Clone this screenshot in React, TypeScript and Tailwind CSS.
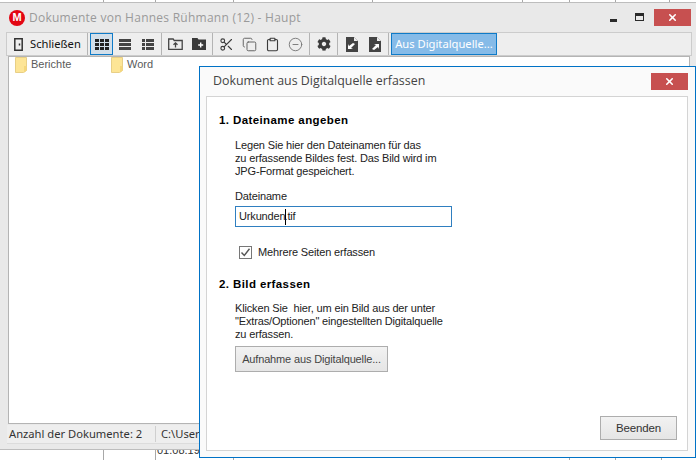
import { CircleMinus, Clipboard, Copy, Scissors, X } from "lucide-react";
import { FaCog } from "react-icons/fa";

const Sep = () => <div className="mx-[2px] h-full w-px shrink-0 bg-[#b4b4b4]" />;

function ToolBtn({ children, className = "" }: { children: React.ReactNode; className?: string }) {
  return (
    <div className={`flex h-full w-[23px] shrink-0 items-center justify-center text-[#3c3c3c] ${className}`}>
      {children}
    </div>
  );
}

function DocArrow({ flip }: { flip?: boolean }) {
  return (
    <svg width="12" height="15" viewBox="0 0 12 15" fill="#444">
      <path d="M0 0h8l4 4v11H0z" />
      <path d="M8 0l4 4H8z" fill="#eee" />
      <path
        d={flip ? "M3 12l4-4-2-1h5v5l-1-2-4 3z" : "M9 7L5 11l2 1H2V7l1 2 4-3z"}
        fill="#fff"
      />
    </svg>
  );
}

function FolderTile({ label, className }: { label: string; className: string }) {
  return (
    <div className={`flex items-start gap-[4px] ${className}`}>
      <svg width="12" height="16" viewBox="0 0 12 16" className="shrink-0">
        <path d="M.5.5h11v13l-3 2h-8z" fill="#fde596" stroke="#e8cf86" />
        <path d="M9 9h2.5v4.5L9 15.5z" fill="#f5d77c" />
      </svg>
      <span className="text-[#5a5a5a]">{label}</span>
    </div>
  );
}

function TableLines({ xs, h }: { xs: number[]; h: string }) {
  return (
    <div className={`flex ${h} shrink-0 bg-white`}>
      {xs.map((w, i) => (
        <div key={i} className="h-full border-r border-[#a8a8a8]" style={{ width: w }} />
      ))}
    </div>
  );
}

export default function App() {
  return (
    <div className="relative h-[460px] w-[696px] overflow-hidden bg-white font-['Open_Sans',sans-serif]">
      <div className="flex h-full flex-col">
        <TableLines xs={[104, 52, 78, 139, 150, 47, 46, 54]} h="h-[2px]" />

        {/* main window */}
        <div className="relative z-10 flex h-[448px] shrink-0 flex-col border-y border-[#bdbdbd] bg-[#e9e9e9]">
          <div className="flex h-[29px] shrink-0 items-center pl-[9px] pr-[5px]">
            <div className="flex h-[16px] w-[16px] items-center justify-center rounded-full bg-[#e30613] font-['Liberation_Sans',sans-serif] text-[11px] font-bold leading-none text-white">
              M
            </div>
            <span className="ml-[4px] whitespace-nowrap text-[12px] tracking-[0.25px] text-[#9a9a9a]">
              Dokumente von Hannes Rühmann (12) - Haupt
            </span>
            <div className="ml-auto flex items-center">
              <div className="mr-[18px] mt-[6px] h-[3px] w-[7px] bg-[#2a2a2a]" />
              <div className="mr-[10px] mt-[-2px] h-[8px] w-[9px] border border-t-[3px] border-[#2a2a2a]" />
              <div className="flex h-[17px] w-[37px] items-center justify-center bg-[#c75050]">
                <X size={11} strokeWidth={3.5} className="text-white" />
              </div>
            </div>
          </div>

          <div className="ml-[6px] mr-[4px] flex h-[24px] shrink-0 items-stretch border border-[#cccccc] bg-[#eeeeee]">
            <div className="flex w-[78px] shrink-0 items-center pl-[7px]">
              <svg width="9" height="13" viewBox="0 0 9 13" fill="none" stroke="#333" strokeWidth="1.5">
                <path d="M.8.8h7.4v11.4H.8z" />
                <path d="M5.5 5.5v2" />
              </svg>
              <span className="ml-[7px] font-['Noto_Sans',sans-serif] text-[11.2px] text-[#111]">Schließen</span>
            </div>
            <Sep />
            <ToolBtn className="border border-[#0f7bc8] bg-[#d2dfea]">
              <svg width="14" height="11" viewBox="0 0 14 11" fill="#222">
                <path d="M0 0h4v3H0zM5 0h4v3H5zM10 0h4v3h-4zM0 4h4v3H0zM5 4h4v3H5zM10 4h4v3h-4zM0 8h4v3H0zM5 8h4v3H5zM10 8h4v3h-4z" />
              </svg>
            </ToolBtn>
            <ToolBtn>
              <svg width="12" height="11" viewBox="0 0 12 11" fill="#444">
                <path d="M0 0h12v3H0zM0 4h12v3H0zM0 8h12v3H0z" />
              </svg>
            </ToolBtn>
            <ToolBtn>
              <svg width="12" height="11" viewBox="0 0 12 11" fill="#444">
                <path d="M0 0h3v3H0zM4 0h8v3H4zM0 4h3v3H0zM4 4h8v3H4zM0 8h3v3H0zM4 8h8v3H4z" />
              </svg>
            </ToolBtn>
            <Sep />
            <ToolBtn className="w-[22px]">
              <svg width="15" height="12" viewBox="0 0 15 12" fill="none" stroke="#444" strokeWidth="1.3">
                <path d="M.7 11.3V1h4.5l1 1.5h8v8.8z" />
                <path d="M7.5 9.5V5M5.5 6.8l2-2 2 2" />
              </svg>
            </ToolBtn>
            <ToolBtn className="w-[22px]">
              <svg width="14" height="12" viewBox="0 0 14 12" fill="#3a3a3a">
                <path d="M0 0h5.5l1 1.5H14V12H0z" />
                <path d="M6.2 7h5M8.7 4.5v5" stroke="#fff" strokeWidth="1.4" />
              </svg>
            </ToolBtn>
            <Sep />
            <ToolBtn>
              <Scissors size={15} strokeWidth={1.8} />
            </ToolBtn>
            <ToolBtn className="text-[#666]">
              <Copy size={15} strokeWidth={1.6} />
            </ToolBtn>
            <ToolBtn className="w-[22px]">
              <Clipboard size={15} strokeWidth={1.8} />
            </ToolBtn>
            <ToolBtn className="text-[#777]">
              <CircleMinus size={15} strokeWidth={1.5} />
            </ToolBtn>
            <Sep />
            <ToolBtn>
              <FaCog size={14} />
            </ToolBtn>
            <Sep />
            <ToolBtn>
              <DocArrow />
            </ToolBtn>
            <ToolBtn>
              <DocArrow flip />
            </ToolBtn>
            <Sep />
            <div className="flex w-[106px] shrink-0 items-center justify-center whitespace-nowrap border border-[#0f7bc8] bg-[#86bbe8] font-['Noto_Sans',sans-serif] text-[11.2px] text-white">
              Aus Digitalquelle...
            </div>
          </div>

          <div className="ml-[8px] mr-[6px] flex h-[368px] shrink-0 border border-[#b4b4b4] bg-white pl-[6px] font-['Liberation_Sans',sans-serif] text-[11px] leading-[14px]">
            <FolderTile label="Berichte" className="w-[96px]" />
            <FolderTile label="Word" className="w-[96px]" />
          </div>

          <div className="mx-[7px] mt-[1px] flex h-[19px] shrink-0 items-center border-b border-[#dcdcdc] bg-[#eeeeee] font-['Noto_Sans',sans-serif] text-[11.2px] text-[#333]">
            <span className="w-[149px] shrink-0 border-r border-[#cfcfcf] pl-[2px]">Anzahl der Dokumente: 2</span>
            <span className="pl-[5px]">C:\Users</span>
          </div>
        </div>

        <div className="relative flex-1">
          <TableLines xs={[104, 52, 78, 336, 46, 46]} h="h-full" />
          <span className="absolute left-[157px] top-[-5px] font-['Liberation_Sans',sans-serif] text-[11px] leading-none text-[#333]">
            01.08.19
          </span>
        </div>
      </div>

      {/* dialog */}
      <div className="absolute left-[199px] top-[66px] z-20 flex h-[392px] w-[497px] flex-col border border-[#0072c6] bg-[#fafafa]">
        <div className="flex h-[29px] shrink-0 items-center pl-[13px] pr-[7px]">
          <span className="text-[12.4px] text-[#444]">Dokument aus Digitalquelle erfassen</span>
          <div className="ml-auto flex h-[17px] w-[37px] items-center justify-center bg-[#c75050]">
            <X size={11} strokeWidth={3.5} className="text-white" />
          </div>
        </div>
        <div className="mb-[6px] ml-[6px] mr-[7px] flex flex-1 flex-col border border-[#d4d4d4] bg-white pl-[12px] pr-[10px] pt-[17px] font-['Liberation_Sans',sans-serif] text-[11px] leading-[13px] tracking-[-0.15px] text-[#222]">
          <h2 className="text-[11.5px] font-bold tracking-[0.4px] text-black">1. Dateiname angeben</h2>
          <p className="ml-[16px] mt-[12px]">
            Legen Sie hier den Dateinamen für das
            <br />
            zu erfassende Bildes fest. Das Bild wird im
            <br />
            JPG-Format gespeichert.
          </p>
          <label className="ml-[16px] mt-[12px]">Dateiname</label>
          <div className="ml-[16px] mt-[3px] flex h-[21px] w-[217px] items-center border border-[#2f7fc0] pl-[3px]">
            Urkunden<span className="-mx-px h-[16px] w-px bg-black" />.tif
          </div>
          <div className="ml-[20px] mt-[19px] flex items-center">
            <div className="flex h-[13px] w-[13px] items-center justify-center border border-[#777]">
              <svg width="11" height="11" viewBox="0 0 11 11" fill="none" stroke="#555" strokeWidth="1.4">
                <path d="M1.5 5.5l2.8 3L9.5 1.8" />
              </svg>
            </div>
            <span className="ml-[6px]">Mehrere Seiten erfassen</span>
          </div>
          <h2 className="mt-[19px] text-[11.5px] font-bold tracking-[0.4px] text-black">2. Bild erfassen</h2>
          <p className="ml-[16px] mt-[11px]">
            Klicken Sie&nbsp; hier, um ein Bild aus der unter
            <br />
            "Extras/Optionen" eingestellten Digitalquelle
            <br />
            zu erfassen.
          </p>
          <button className="ml-[16px] mt-[5px] h-[26px] w-[153px] border border-[#adadad] bg-gradient-to-b from-[#f2f2f2] to-[#e5e5e5] text-[#444]">
            Aufnahme aus Digitalquelle...
          </button>
          <button className="ml-auto mt-[44px] h-[24px] w-[77px] border border-[#adadad] bg-gradient-to-b from-[#f2f2f2] to-[#e5e5e5] text-[11.5px] text-[#333]">
            Beenden
          </button>
        </div>
      </div>
    </div>
  );
}
